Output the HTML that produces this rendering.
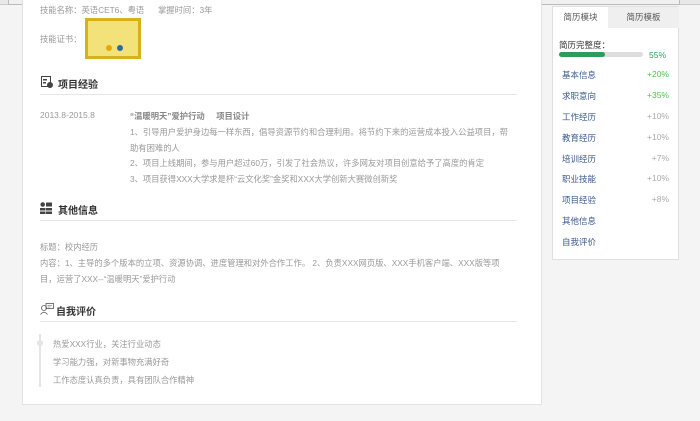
<!DOCTYPE html><html><head><meta charset="utf-8"><style>
*{margin:0;padding:0;box-sizing:border-box}
body{width:700px;height:421px;background:#f4f4f4;font-family:"Liberation Sans","Noto Sans CJK SC",sans-serif;position:relative;overflow:hidden;color:#999;font-size:8.3px}
.a{position:absolute;white-space:nowrap}
.card{position:absolute;left:22px;top:-2px;width:520px;height:407px;background:#fff;border:1px solid #e2e2e2}
.h{font-size:10px;font-weight:bold;color:#333}
.hr{position:absolute;left:40px;width:477px;height:1px;background:#e6e6e6}
.side{position:absolute;left:552px;top:6px;width:127px;height:254px;background:#fff;border:1px solid #e0e0e0}
.si{position:absolute;left:9px;font-size:8.5px;color:#3a5a8c}
.sv{position:absolute;right:9px;font-size:8.5px;color:#aaa}
.g{color:#4ec24e}
</style></head><body>
<div class="a" style="left:0;top:0;width:700px;height:5px;background:#e8e8e8;border-bottom:1px solid #ccc"></div>
<div class="a" style="left:8px;top:0;width:265px;height:5px;background:#f0f0f0;border:1px solid #bbb;border-top:none"></div>
<div class="a" style="left:380px;top:0;width:300px;height:5px;background:#f0f0f0;border:1px solid #bbb;border-top:none"></div>
<div class="card"></div>
<div class="a" style="left:40px;top:4px">技能名称：英语CET6、粤语&nbsp;&nbsp;&nbsp;&nbsp;&nbsp;&nbsp;掌握时间：3年</div>
<div class="a" style="left:40px;top:33px">技能证书：</div>
<div class="a" style="left:85px;top:18px;width:56px;height:41px;background:#f3e17a;border:3px solid #d4b21c"><div style="position:absolute;left:18px;top:24px;width:6px;height:6px;border-radius:50%;background:#e8a900"></div><div style="position:absolute;left:29px;top:24px;width:6px;height:6px;border-radius:50%;background:#2d6aa0"></div></div>
<svg class="a" style="left:41px;top:76px" width="12" height="12" viewBox="0 0 12 12"><rect x="0.5" y="0.5" width="9" height="10" fill="none" stroke="#444"/><rect x="2" y="3" width="4" height="1.5" fill="#444"/><rect x="2" y="6" width="3" height="1.5" fill="#444"/><circle cx="9" cy="9" r="3" fill="#444"/></svg>
<div class="a h" style="left:58px;top:76px">项目经验</div>
<div class="hr" style="top:94px"></div>
<div class="a" style="left:40px;top:110px;font-size:8.5px">2013.8-2015.8</div>
<div class="a" style="left:130px;top:110px;font-weight:bold;color:#888">“温暖明天”爱护行动&nbsp;&nbsp;&nbsp;&nbsp;&nbsp;项目设计</div>
<div class="a" style="left:130px;top:126px">1、引导用户爱护身边每一样东西，倡导资源节约和合理利用。将节约下来的运营成本投入公益项目，帮</div>
<div class="a" style="left:130px;top:142px">助有困难的人</div>
<div class="a" style="left:130px;top:157px">2、项目上线期间，参与用户超过60万，引发了社会热议，许多网友对项目创意给予了高度的肯定</div>
<div class="a" style="left:130px;top:173px">3、项目获得XXX大学求是杯“云文化奖”金奖和XXX大学创新大赛微创新奖</div>
<svg class="a" style="left:40px;top:202px" width="12" height="12" viewBox="0 0 12 12"><circle cx="2.7" cy="2.5" r="2.3" fill="#444"/><rect x="6" y="0.5" width="6" height="4" fill="#444"/><rect x="0" y="6" width="5.5" height="2.5" fill="#444"/><rect x="6" y="6" width="6" height="2.5" fill="#444"/><rect x="0" y="9.5" width="5.5" height="2.5" fill="#444"/><rect x="6" y="9.5" width="6" height="2.5" fill="#444"/></svg>
<div class="a h" style="left:58px;top:202px">其他信息</div>
<div class="hr" style="top:220px"></div>
<div class="a" style="left:40px;top:241px">标题：校内经历</div>
<div class="a" style="left:40px;top:257px">内容：1、主导的多个版本的立项、资源协调、进度管理和对外合作工作。 2、负责XXX网页版、XXX手机客户端、XXX版等项</div>
<div class="a" style="left:40px;top:273px">目，运营了XXX--“温暖明天”爱护行动</div>
<svg class="a" style="left:40px;top:303px" width="14" height="12" viewBox="0 0 14 12"><circle cx="4" cy="5" r="2.5" fill="none" stroke="#555" stroke-width="0.8"/><path d="M0.5 11.5 Q4 7 7.5 11.5" fill="none" stroke="#555" stroke-width="0.8"/><rect x="6" y="0.5" width="7.5" height="5" fill="none" stroke="#555" stroke-width="0.8"/><path d="M7.5 2.5h4.5M7.5 4h3" stroke="#555" stroke-width="0.6"/></svg>
<div class="a h" style="left:56px;top:303px">自我评价</div>
<div class="hr" style="top:321px"></div>
<div class="a" style="left:39px;top:334px;width:2px;height:53px;background:#e4e4e4"></div>
<div class="a" style="left:37px;top:340px;width:6px;height:6px;border-radius:50%;background:#e4e4e4"></div>
<div class="a" style="left:53px;top:338px">热爱XXX行业，关注行业动态</div>
<div class="a" style="left:53px;top:356px">学习能力强，对新事物充满好奇</div>
<div class="a" style="left:53px;top:374px">工作态度认真负责，具有团队合作精神</div>
<div class="side">
<div class="a" style="left:0;top:0;width:55px;height:21px;background:#fff;font-size:8.5px;color:#555;text-align:center;line-height:21px">简历模块</div>
<div class="a" style="left:55px;top:0;width:71px;height:21px;background:#efefef;font-size:8.5px;color:#555;text-align:center;line-height:21px">简历模板</div>
<div class="a" style="left:6px;top:32px;font-size:8.5px;color:#333">简历完整度：</div>
<div class="a" style="left:6px;top:45px;width:84px;height:5px;border-radius:3px;background:#ddd"><div style="width:46px;height:5px;border-radius:3px;background:#2e9d5a"></div></div>
<div class="a" style="left:96px;top:43px;font-size:8.5px;color:#2e9d5a">55%</div>
<div class="si" style="top:62px">基本信息</div><div class="sv g" style="top:62px">+20%</div>
<div class="si" style="top:83px">求职意向</div><div class="sv g" style="top:83px">+35%</div>
<div class="si" style="top:104px">工作经历</div><div class="sv" style="top:104px">+10%</div>
<div class="si" style="top:125px">教育经历</div><div class="sv" style="top:125px">+10%</div>
<div class="si" style="top:146px">培训经历</div><div class="sv" style="top:146px">+7%</div>
<div class="si" style="top:166px">职业技能</div><div class="sv" style="top:166px">+10%</div>
<div class="si" style="top:187px">项目经验</div><div class="sv" style="top:187px">+8%</div>
<div class="si" style="top:208px">其他信息</div>
<div class="si" style="top:229px">自我评价</div>
</div>
</body></html>
